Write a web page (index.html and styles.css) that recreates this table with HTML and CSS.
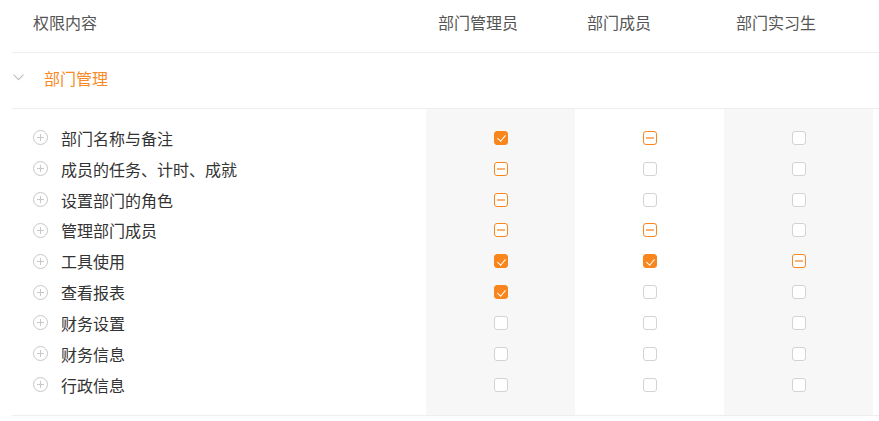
FILE: index.html
```html
<!DOCTYPE html>
<html lang="zh-CN">
<head>
<meta charset="utf-8">
<title>权限</title>
<link rel="stylesheet" href="styles.css">
</head>
<body>
<div class="table">
  <div class="head">
    <div class="h-label">权限内容</div>
    <div class="h-col">部门管理员</div>
    <div class="h-col">部门成员</div>
    <div class="h-col">部门实习生</div>
  </div>
  <div class="section">
    <svg class="chev" width="11" height="7" viewBox="0 0 11 7"><path d="M0.6 0.6 L5.5 5.6 L10.4 0.6" fill="none" stroke="#bdbdbd" stroke-width="1.1"/></svg>
    <span class="sec-title">部门管理</span>
  </div>
  <div class="body">
    <div class="labels">
      <div class="row"><span class="plus"></span>部门名称与备注</div>
      <div class="row"><span class="plus"></span>成员的任务、计时、成就</div>
      <div class="row"><span class="plus"></span>设置部门的角色</div>
      <div class="row"><span class="plus"></span>管理部门成员</div>
      <div class="row"><span class="plus"></span>工具使用</div>
      <div class="row"><span class="plus"></span>查看报表</div>
      <div class="row"><span class="plus"></span>财务设置</div>
      <div class="row"><span class="plus"></span>财务信息</div>
      <div class="row"><span class="plus"></span>行政信息</div>
    </div>
    <div class="col gray">
      <div class="cell"><span class="cb on"></span></div>
      <div class="cell"><span class="cb half"></span></div>
      <div class="cell"><span class="cb half"></span></div>
      <div class="cell"><span class="cb half"></span></div>
      <div class="cell"><span class="cb on"></span></div>
      <div class="cell"><span class="cb on"></span></div>
      <div class="cell"><span class="cb"></span></div>
      <div class="cell"><span class="cb"></span></div>
      <div class="cell"><span class="cb"></span></div>
    </div>
    <div class="col">
      <div class="cell"><span class="cb half"></span></div>
      <div class="cell"><span class="cb"></span></div>
      <div class="cell"><span class="cb"></span></div>
      <div class="cell"><span class="cb half"></span></div>
      <div class="cell"><span class="cb on"></span></div>
      <div class="cell"><span class="cb"></span></div>
      <div class="cell"><span class="cb"></span></div>
      <div class="cell"><span class="cb"></span></div>
      <div class="cell"><span class="cb"></span></div>
    </div>
    <div class="col gray">
      <div class="cell"><span class="cb"></span></div>
      <div class="cell"><span class="cb"></span></div>
      <div class="cell"><span class="cb"></span></div>
      <div class="cell"><span class="cb"></span></div>
      <div class="cell"><span class="cb half"></span></div>
      <div class="cell"><span class="cb"></span></div>
      <div class="cell"><span class="cb"></span></div>
      <div class="cell"><span class="cb"></span></div>
      <div class="cell"><span class="cb"></span></div>
    </div>
    <div class="rest"></div>
  </div>
</div>
</body>
</html>
```
FILE: styles.css
```css
* { box-sizing: border-box; }
html, body { margin: 0; padding: 0; background: #fff; }
body {
  font-family: "Noto Sans CJK SC", "Noto Sans", sans-serif;
  font-size: 16px;
  color: #333;
}
.table {
  margin-left: 12px;
  width: 867px;
}
.head {
  display: grid;
  grid-template-columns: 414px 149px 149px 149px 1fr;
  height: 53px;
  padding-top: 10px;
  border-bottom: 1px solid #eeeeee;
  color: #555;
  line-height: 24px;
}
.h-label { padding-left: 21px; }
.h-col { padding-left: 12px; }
.section {
  display: flex;
  align-items: center;
  height: 56px;
  padding-bottom: 6px;
  border-bottom: 1px solid #eeeeee;
}
.chev { margin-left: 1px; display: block; }
.sec-title {
  margin-left: 20px;
  color: #f98a25;
  line-height: 24px;
}
.body {
  display: grid;
  grid-template-columns: 414px 149px 149px 149px 1fr;
  border-bottom: 1px solid #eeeeee;
}
.labels, .col {
  padding: 13.5px 0 14.5px;
}
.gray { background: #f7f7f7; }
.row {
  height: 30.85px;
  display: flex;
  align-items: center;
  padding-left: 21px;
  line-height: 24px;
}
.plus {
  position: relative;
  width: 15px;
  height: 15px;
  border: 1px solid #c8c8c8;
  border-radius: 50%;
  margin-right: 13px;
  flex: none;
}
.plus::before, .plus::after {
  content: "";
  position: absolute;
  background: #c8c8c8;
}
.plus::before { left: 3px; right: 3px; top: 6px; height: 1px; }
.plus::after { top: 3px; bottom: 3px; left: 6px; width: 1px; }
.cell {
  height: 30.85px;
  display: flex;
  align-items: center;
  justify-content: center;
}
.cb {
  position: relative;
  width: 14px;
  height: 14px;
  border: 1px solid #d3d3d3;
  border-radius: 3px;
  background: #fff;
}
.cb.on {
  background: #f8861c;
  border-color: #f8861c;
}
.cb.on::after {
  content: "";
  position: absolute;
  left: 4px;
  top: 1.5px;
  width: 3.5px;
  height: 7px;
  border-right: 1.6px solid #fff;
  border-bottom: 1.6px solid #fff;
  transform: rotate(40deg);
}
.cb.half { border-color: #f8861c; }
.cb.half::after {
  content: "";
  position: absolute;
  left: 2px;
  right: 2px;
  top: 5px;
  height: 2px;
  background: #fbb275;
}
```
